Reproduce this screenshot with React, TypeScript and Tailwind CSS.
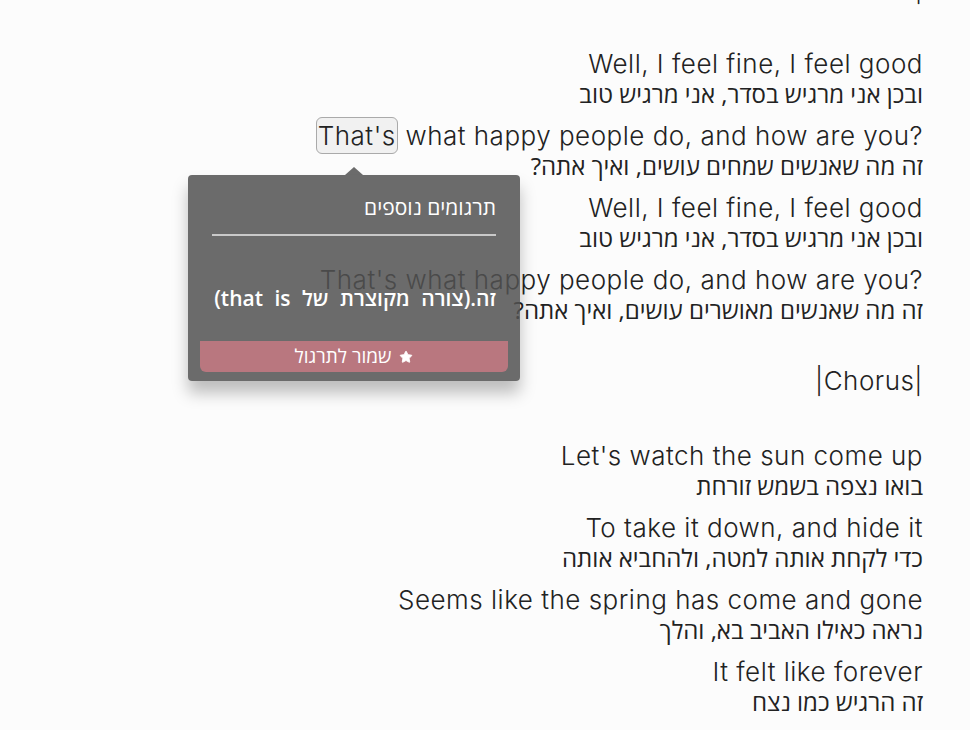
import { Star } from "lucide-react";

interface LyricLine {
  en: string;
  he: string;
}

const FIRST: LyricLine[] = [
  { en: "Well, I feel fine, I feel good", he: "ובכן אני מרגיש בסדר, אני מרגיש טוב" },
  { en: "That's what happy people do, and how are you?", he: "זה מה שאנשים שמחים עושים, ואיך אתה?" },
  { en: "Well, I feel fine, I feel good", he: "ובכן אני מרגיש בסדר, אני מרגיש טוב" },
  { en: "That's what happy people do, and how are you?", he: "זה מה שאנשים מאושרים עושים, ואיך אתה?" },
];

const CHORUS: LyricLine[] = [
  { en: "Let's watch the sun come up", he: "בואו נצפה בשמש זורחת" },
  { en: "To take it down, and hide it", he: "כדי לקחת אותה למטה, ולהחביא אותה" },
  { en: "Seems like the spring has come and gone", he: "נראה כאילו האביב בא, והלך" },
  { en: "It felt like forever", he: "זה הרגיש כמו נצח" },
];

const EN_TEXT = "font-['Inter',sans-serif] text-[26px] font-light tracking-[0.5px] leading-[32px] text-[#222]";
const HE_FONT = "font-['Open_Sans','DejaVu_Sans',sans-serif]";

function Line({ line, highlight }: { line: LyricLine; highlight?: boolean }) {
  const words = line.en.split(" ");
  return (
    <div className="mb-3 flex flex-col items-end">
      <p dir="ltr" className={EN_TEXT}>
        {highlight ? (
          <>
            <span className="rounded-[6px] border border-[#aaa] bg-[#f1f1f1] px-[1px] py-[2px]">{words[0]}</span>{" "}
            {words.slice(1).join(" ")}
          </>
        ) : (
          line.en
        )}
      </p>
      <p dir="rtl" className={`${HE_FONT} text-[24px] leading-[28px] text-[#222]`}>
        {line.he}
      </p>
    </div>
  );
}

export default function App() {
  return (
    <div className="relative min-h-[730px] overflow-hidden bg-[#fcfcfc]">
      <div className="flex flex-col items-end pr-[47px]">
        <p className={`${EN_TEXT} -mt-[27px] mb-[43px]`}>|</p>
        {FIRST.map((line, i) => (
          <Line key={i} line={line} highlight={i === 1} />
        ))}
        <p className={`${EN_TEXT} mt-[29px] mb-[43px]`}>|Chorus|</p>
        {CHORUS.map((line, i) => (
          <Line key={i} line={line} />
        ))}
      </div>

      <div className="absolute left-[188px] top-[175px] w-[332px] rounded-[4px] bg-[#515151]/85 px-3 pb-[9px] pt-[18px] shadow-[0_12px_16px_rgba(0,0,0,0.25)]">
        <div className="absolute -top-[8px] left-[157px] h-0 w-0 border-x-[9px] border-b-[8px] border-x-transparent border-b-[#515151]/85" />
        <div dir="rtl" className={`${HE_FONT} mx-3 border-b-2 border-[#c9c9c9] pb-[13px] text-[21px] leading-[28px] text-white`}>
          תרגומים נוספים
        </div>
        <div dir="rtl" className={`${HE_FONT} mx-3 mt-[48px] mb-[29px] text-[21px] font-semibold leading-[28px] text-white [word-spacing:6px]`}>
          זה.(צורה מקוצרת של that is)
        </div>
        <button
          type="button"
          dir="rtl"
          className={`${HE_FONT} flex h-[31px] w-full items-center justify-center gap-2 rounded-b-[6px] bg-[#b9777f] text-[19px] text-white`}
        >
          <Star className="h-[14px] w-[14px] fill-white" strokeWidth={1.5} />
          שמור לתרגול
        </button>
      </div>
    </div>
  );
}
